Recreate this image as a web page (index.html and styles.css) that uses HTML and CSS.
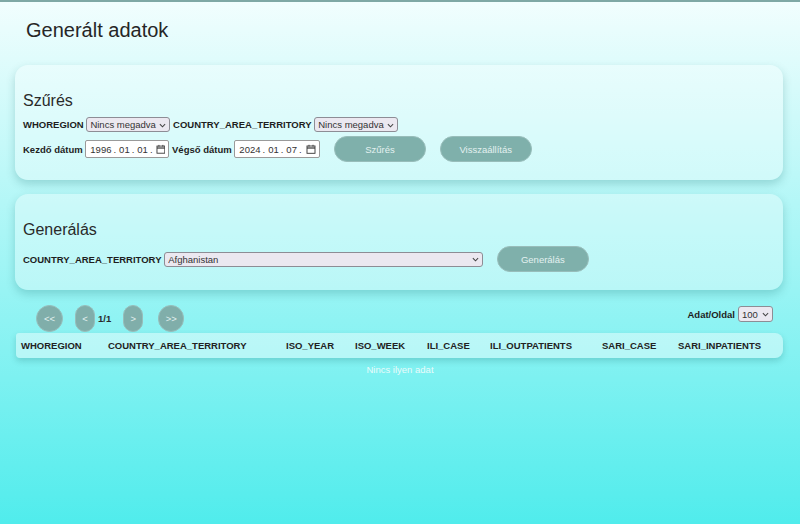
FILE: index.html
```html
<!DOCTYPE html>
<html lang="hu">
<head>
<meta charset="utf-8">
<title>Generált adatok</title>
<link rel="stylesheet" href="styles.css">
</head>
<body>
<h1 class="page-title">Generált adatok</h1>

<section class="card">
  <h2 class="card-title">Szűrés</h2>
  <div class="form-row">
    <label class="lbl">WHOREGION</label>
    <div class="select-wrap">
      <select class="sel sel-sm"><option>Nincs megadva</option></select>
      <svg class="chev" viewBox="0 0 8 5" width="7" height="5"><path d="M1 1 L4 4 L7 1" fill="none" stroke="#444" stroke-width="1.2"/></svg>
    </div>
    <label class="lbl">COUNTRY_AREA_TERRITORY</label>
    <div class="select-wrap">
      <select class="sel sel-sm"><option>Nincs megadva</option></select>
      <svg class="chev" viewBox="0 0 8 5" width="7" height="5"><path d="M1 1 L4 4 L7 1" fill="none" stroke="#444" stroke-width="1.2"/></svg>
    </div>
  </div>
  <div class="form-row">
    <label class="lbl">Kezdő dátum</label>
    <div class="date-input">
      <span>1996</span><span class="sep">.</span><span>01</span><span class="sep">.</span><span>01</span><span class="sep">.</span>
      <svg class="cal" viewBox="0 0 10 10" width="10" height="10"><rect x="1" y="2" width="8" height="7.3" fill="none" stroke="#333" stroke-width="0.9"/><path d="M1 4 H9" stroke="#333" stroke-width="1.2"/><path d="M3 0.8 V2.6 M7 0.8 V2.6" stroke="#333" stroke-width="0.9"/></svg>
    </div>
    <label class="lbl">Végső dátum</label>
    <div class="date-input date-input-wide">
      <span>2024</span><span class="sep">.</span><span>01</span><span class="sep">.</span><span>07</span><span class="sep">.</span>
      <svg class="cal" viewBox="0 0 10 10" width="10" height="10"><rect x="1" y="2" width="8" height="7.3" fill="none" stroke="#333" stroke-width="0.9"/><path d="M1 4 H9" stroke="#333" stroke-width="1.2"/><path d="M3 0.8 V2.6 M7 0.8 V2.6" stroke="#333" stroke-width="0.9"/></svg>
    </div>
    <button class="btn btn-spaced">Szűrés</button>
    <button class="btn btn-spaced">Visszaállítás</button>
  </div>
</section>

<section class="card card-gen">
  <h2 class="card-title">Generálás</h2>
  <div class="form-row">
    <label class="lbl">COUNTRY_AREA_TERRITORY</label>
    <div class="select-wrap">
      <select class="sel sel-wide"><option>Afghanistan</option></select>
      <svg class="chev" viewBox="0 0 8 5" width="7" height="5"><path d="M1 1 L4 4 L7 1" fill="none" stroke="#444" stroke-width="1.2"/></svg>
    </div>
    <button class="btn btn-spaced">Generálás</button>
  </div>
</section>

<div class="pager">
  <div class="pager-left">
    <button class="pbtn pbtn-first">&lt;&lt;</button>
    <button class="pbtn pbtn-prev">&lt;</button>
    <span class="page-num">1/1</span>
    <button class="pbtn pbtn-next">&gt;</button>
    <button class="pbtn pbtn-last">&gt;&gt;</button>
  </div>
  <div class="pager-right">
    <label class="lbl">Adat/Oldal</label>
    <div class="select-wrap">
      <select class="sel sel-num"><option>100</option></select>
      <svg class="chev" viewBox="0 0 8 5" width="7" height="5"><path d="M1 1 L4 4 L7 1" fill="none" stroke="#444" stroke-width="1.2"/></svg>
    </div>
  </div>
</div>

<div class="table-head">
  <div class="th">WHOREGION</div>
  <div class="th">COUNTRY_AREA_TERRITORY</div>
  <div class="th">ISO_YEAR</div>
  <div class="th">ISO_WEEK</div>
  <div class="th">ILI_CASE</div>
  <div class="th">ILI_OUTPATIENTS</div>
  <div class="th">SARI_CASE</div>
  <div class="th">SARI_INPATIENTS</div>
</div>
<p class="empty">Nincs ilyen adat</p>
</body>
</html>
```
FILE: styles.css
```css
html {
  min-height: 100%;
  background: linear-gradient(to bottom, #f2fefe 0%, #50ecec 100%);
}
body {
  margin: 0;
  border-top: 2px solid #7fa8a5;
  font-family: "Liberation Sans", Arial, sans-serif;
  color: #222;
}
.page-title {
  margin: 17px 0 0 26px;
  font-size: 20px;
  line-height: 23px;
  font-weight: normal;
  color: #262626;
}
.card {
  margin: 23px 17px 0 15px;
  padding: 27px 8px 18px;
  border-radius: 13px;
  background: rgba(255, 255, 255, 0.32);
  box-shadow: 0 4px 10px rgba(0, 90, 90, 0.22);
}
.card-gen {
  margin-top: 14px;
}
.card-title {
  margin: 0 0 7px;
  font-size: 16px;
  line-height: 18px;
  font-weight: normal;
  color: #2a2a2a;
}
.form-row {
  display: flex;
  align-items: center;
  gap: 2.7px;
}
.form-row + .form-row {
  margin-top: 4px;
}
.lbl {
  font-size: 9.5px;
  font-weight: bold;
  color: #1e1e1e;
  white-space: nowrap;
}
.select-wrap {
  position: relative;
  display: flex;
}
.sel {
  appearance: none;
  -webkit-appearance: none;
  margin: 0;
  height: 15px;
  padding: 0 12px 0 3px;
  font-family: "Liberation Sans", Arial, sans-serif;
  font-size: 9.5px;
  color: #333;
  background: #ebe8f0;
  border: 1px solid #8d8d95;
  border-radius: 3px;
}
.sel-sm { width: 84px; }
.sel-wide { width: 319px; }
.sel-num { width: 35px; height: 16px; }
.chev {
  position: absolute;
  right: 4px;
  top: 50%;
  margin-top: -2px;
  pointer-events: none;
}
.date-input {
  display: flex;
  align-items: center;
  box-sizing: border-box;
  width: 84px;
  height: 18px;
  padding: 0 3px 0 4px;
  background: #fff;
  border: 1px solid #9a9a9a;
  border-radius: 2px;
  font-size: 9.5px;
  color: #333;
}
.date-input-wide { width: 86px; }
.date-input .sep {
  margin: 0 3px 0 2px;
}
.cal {
  margin-left: auto;
}
.btn {
  width: 92px;
  height: 26px;
  padding: 0;
  border: 1px solid #98bdba;
  border-radius: 13px;
  background: #7fb0ab;
  color: #e3f1f0;
  font-family: "Liberation Sans", Arial, sans-serif;
  font-size: 9.5px;
}
.btn-spaced {
  margin-left: 11px;
}
.pager {
  display: flex;
  justify-content: space-between;
  align-items: flex-start;
  margin: 14px 17px 0 16px;
  height: 29px;
}
.pager-left {
  display: flex;
  align-items: center;
  padding-left: 20px;
  padding-top: 1px;
}
.pbtn {
  height: 27px;
  padding: 0;
  border: 1px solid #98bdba;
  border-radius: 14px;
  background: #80aeaa;
  color: #e3f1f0;
  font-family: "Liberation Sans", Arial, sans-serif;
  font-size: 9.5px;
}
.pbtn-first { width: 27px; }
.pbtn-prev { width: 20px; margin-left: 12px; }
.pbtn-next { width: 20px; margin-left: 12px; }
.pbtn-last { width: 26px; margin-left: 15px; }
.page-num {
  margin-left: 3px;
  font-size: 9.5px;
  font-weight: bold;
  color: #2a2a2a;
}
.pager-right {
  display: flex;
  align-items: center;
  gap: 3px;
  margin-top: 2px;
  margin-right: 10px;
}
.table-head {
  display: grid;
  grid-template-columns: 87px 178px 69px 72px 63px 112px 76px 110px;
  align-items: center;
  margin: 0 17px 0 16px;
  height: 25px;
  border-radius: 3px 8px 8px 4px;
  background: rgba(255, 255, 255, 0.42);
  box-shadow: 0 3px 6px rgba(0, 80, 80, 0.2);
}
.th {
  padding-left: 5px;
  font-size: 9.5px;
  font-weight: bold;
  color: #222;
  white-space: nowrap;
}
.empty {
  margin: 6px 0 0;
  text-align: center;
  font-size: 9.5px;
  line-height: 11px;
  color: #e9fbfb;
}
```
